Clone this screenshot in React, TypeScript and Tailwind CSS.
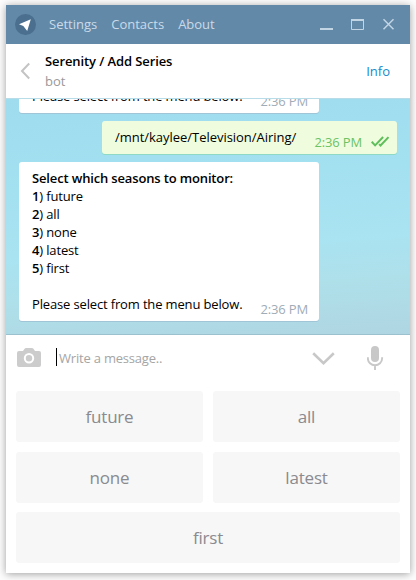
import type { ReactNode } from "react";

function TitleBar() {
  return (
    <header className="flex h-[39px] shrink-0 items-center bg-[#6389a8] pl-[9px] pr-[14px] text-[13px] text-[#c9dbea]">
      <svg width="21" height="21" viewBox="0 0 21 21" className="mr-[13px]">
        <circle cx="10.5" cy="10.5" r="10.5" fill="#4a6f8f" />
        <path d="M15.8 5.2 4 10.3l4.3 1.6 3.9 5z" fill="#fff" />
      </svg>
      <nav className="flex gap-[14px]">
        <span>Settings</span>
        <span>Contacts</span>
        <span>About</span>
      </nav>
      <div className="ml-auto flex items-center">
        <svg width="76" height="13" viewBox="0 0 76 13" fill="none" stroke="#c1d5e5">
          <path d="M0 11h13" strokeWidth="2" />
          <path d="M31 2h13" strokeWidth="2" />
          <path d="M31.5 2v9.5h12V2" />
          <path d="m63.5 1.3 10 10M73.5 1.3l-10 10" strokeWidth="1.5" />
        </svg>
      </div>
    </header>
  );
}

function ChatHeader() {
  return (
    <div className="flex h-[54px] shrink-0 items-center bg-white pb-px pl-[14px] pr-5">
      <svg width="11" height="18" viewBox="0 0 11 18" className="mr-[14px]" fill="none" stroke="#c4c4c4" strokeWidth="2">
        <path d="M9.2 1.5 2 9l7.2 7.5" />
      </svg>
      <div className="leading-5">
        <div className="font-semibold tracking-[-0.1px] text-black">Serenity / Add Series</div>
        <div className="text-[#999]">bot</div>
      </div>
      <span className="ml-auto mt-[3px] text-[#168acd]">Info</span>
    </div>
  );
}

function Incoming({ children }: { children: ReactNode }) {
  return (
    <div className="flex w-[300px] shrink-0 items-end justify-between rounded-[3px] bg-white pb-[8px] pt-[7px] pl-[13px] pr-[11px] leading-[18px] shadow-[0_1px_0_#9fc5d6]">
      <div className="tracking-[-0.15px]">{children}</div>
      <span className="-mb-[5px] tracking-[-0.15px] text-[#a0acb6]">2:36 PM</span>
    </div>
  );
}

function Outgoing() {
  return (
    <div className="mr-[13px] flex h-[33px] w-[295px] shrink-0 items-end self-end rounded-[3px] bg-[#effdde] pb-[8px] pl-[13px] pr-2 leading-[18px] shadow-[0_1px_0_#8dd9c5]">
      <span className="tracking-[-0.03px]">/mnt/kaylee/Television/Airing/</span>
      <span className="-mb-[5px] ml-auto tracking-[-0.15px] text-[#6cc264]">2:36 PM</span>
      <svg width="18" height="11" viewBox="0 0 18 11" className="-mb-px ml-[9px]" fill="none" stroke="#5fbf5b" strokeWidth="2">
        <path d="m.7 5.8 3.4 3.6 8-8.4M8.1 8.1l1.4 1.4 8-8.4" />
      </svg>
    </div>
  );
}

const seasons = ["future", "all", "none", "latest", "first"];

function Messages() {
  return (
    <main className="flex h-[237px] shrink-0 flex-col justify-end gap-2 overflow-hidden border-t border-b border-t-[#b9dde8] border-b-[#9bc1ce] bg-[linear-gradient(176deg,#9fdcee_0%,#a3e0f0_35%,#a9e3f2_60%,#aee0ea_78%,#afd5e2_100%)] pb-[13px] pl-[13px]">
      <Incoming>Please select from the menu below.</Incoming>
      <Outgoing />
      <Incoming>
        <div className="font-semibold">Select which seasons to monitor:</div>
        {seasons.map((name, i) => (
          <div key={name}>
            <span className="font-semibold">{i + 1}</span>) {name}
          </div>
        ))}
        <div className="mt-[18px]">Please select from the menu below.</div>
      </Incoming>
    </main>
  );
}

function Composer() {
  return (
    <div className="flex h-[56px] shrink-0 items-start pl-[11px]">
      <svg width="24" height="19" viewBox="0 0 24 19" className="mt-[13px]">
        <path d="M2 3h4l1.6-2.2Q8.2 0 9 0h6q.8 0 1.4.8L18 3h4q2 0 2 2v12q0 2-2 2H2q-2 0-2-2V5q0-2 2-2z" fill="#ccc" />
        <circle cx="12" cy="10.3" r="4.2" fill="none" stroke="#fff" strokeWidth="2" />
      </svg>
      <span className="ml-[15px] mt-[13px] h-[18px] w-px bg-black" />
      <span className="ml-[2px] mt-[14px] leading-[18px] tracking-[-0.2px] text-[#a5a5a5]">Write a message..</span>
      <div className="ml-auto mr-[26px] mt-[11px] flex items-start gap-[32px]">
        <svg width="23" height="14" viewBox="0 0 23 14" className="mt-[6px]" fill="none" stroke="#c8c8c8" strokeWidth="2.6">
          <path d="m1.2 1.3 10.3 10 10.3-10" />
        </svg>
        <svg width="17" height="24" viewBox="0 0 17 24" fill="none" stroke="#c8c8c8">
          <rect x="4" y="0" width="8" height="16" rx="4" fill="#c8c8c8" stroke="none" />
          <path d="M.9 11.2v1.3a7.1 6.8 0 0 0 14.2 0v-1.3M8 19v5" strokeWidth="1.9" />
        </svg>
      </div>
    </div>
  );
}

function Key({ label, className = "" }: { label: string; className?: string }) {
  return (
    <button className={`h-[51px] rounded-[3px] bg-[#f7f7f7] pt-px text-[17px] tracking-[-0.2px] text-[#8a8a8f] ${className}`}>{label}</button>
  );
}

export default function App() {
  return (
    <div className="h-[580px] w-[416px] overflow-hidden bg-[#fdfdfd] pl-[6px] pt-[5px] font-['Open_Sans',sans-serif] text-[13px] text-black">
      <div className="flex h-[568px] w-[404px] flex-col bg-white shadow-[0_1px_8px_rgba(0,0,0,0.38)]">
        <TitleBar />
        <ChatHeader />
        <Messages />
        <Composer />
        <div className="grid grid-cols-2 gap-x-[10px] px-[10px]">
          <Key label="future" className="mb-[10px]" />
          <Key label="all" className="mb-[10px]" />
          <Key label="none" className="mb-[9px]" />
          <Key label="latest" className="mb-[9px]" />
          <Key label="first" className="col-span-2" />
        </div>
      </div>
    </div>
  );
}
